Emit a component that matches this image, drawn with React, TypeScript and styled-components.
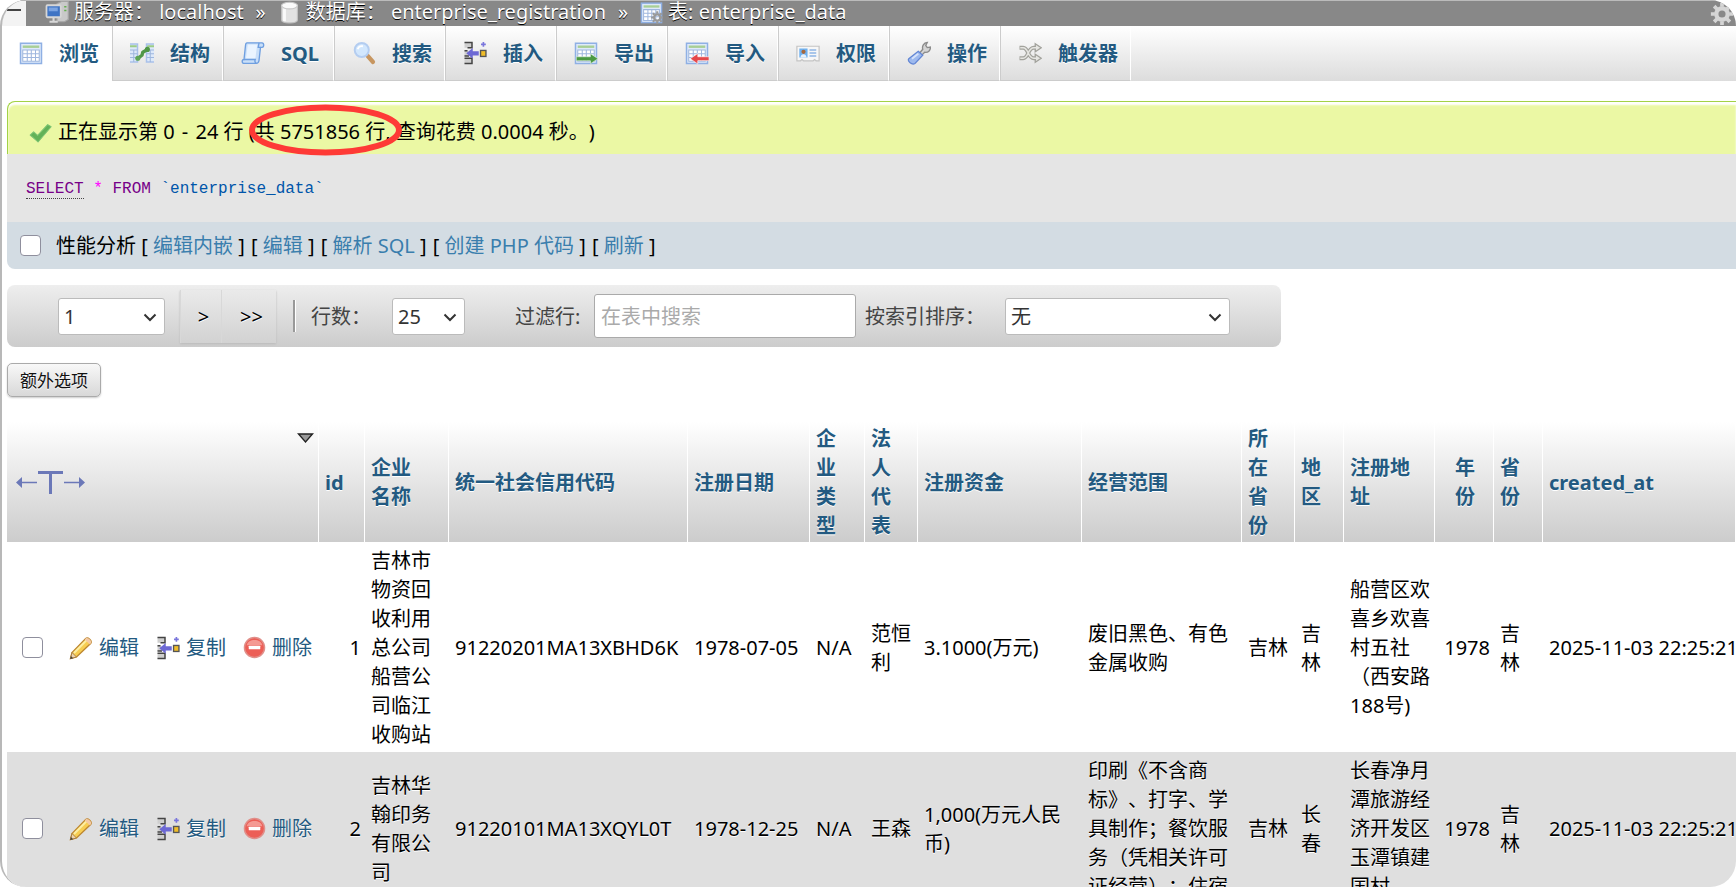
import React from 'react';
import styled, { createGlobalStyle, css } from 'styled-components';

const GlobalStyle = createGlobalStyle`
  * { box-sizing: border-box; }
  html, body { margin: 0; background: #fff; }
  body {
    overflow: hidden;
    font-family: "Noto Sans", "Noto Sans CJK SC", sans-serif;
    font-size: 20px;
    line-height: 29px;
    text-spacing-trim: space-all;
    color: #000;
  }
  a { text-decoration: none; color: #235a81; }
`;

const Frame = styled.div`
  height: 100vh;
  overflow: hidden;
  border-radius: 26px;
  border-left: 2px solid #b8b8b8;
  background: #fff;
`;

const TopBar = styled.header`
  display: flex;
  align-items: center;
  height: 26px;
  border-top: 1px solid #bbb;
  background: #888;
  color: #fff;
  text-shadow: 0 1px 0 #000;
  overflow: hidden;
`;

const Collapse = styled.button`
  width: 24px;
  height: 25px;
  padding: 8px 0 0 5px;
  border: 0;
  background: #f3f3f3;
  display: flex;
  align-items: flex-start;
  span { width: 14px; height: 2px; background: #444; }
`;

const Crumbs = styled.nav`
  display: flex;
  align-items: center;
  flex: 1;
  margin-left: 19px;
  height: 25px;
  padding-bottom: 3px;
  line-height: 20px;
  white-space: pre;
  a { color: #fff; }
  svg { margin-right: 5px; }
`;

const Crumb = styled.a`
  display: flex;
  align-items: center;
`;

const Sep = styled.span`
  width: 34px;
  text-align: center;
`;

const GearButton = styled.button`
  padding: 0;
  margin-right: 2px;
  border: 0;
  background: none;
  display: flex;
`;

const Tabs = styled.nav`
  display: flex;
  height: 55px;
  background: linear-gradient(#fff, #dcdcdc);
`;

const Tab = styled.a<{ $active?: boolean }>`
  display: flex;
  align-items: center;
  gap: 16px;
  min-width: 111px;
  padding: 0 12px 0 17px;
  border-left: 1px solid #ccc;
  border-right: 1px solid #fff;
  border-bottom: 1px solid #ccc;
  font-weight: bold;
  text-shadow: 0 1px 0 #fff;
  white-space: nowrap;
  ${(p) => p.$active && css`
    min-width: 109px;
    background: #fff;
    border-left: 0;
    border-color: #fff;
  `}
`;

const Content = styled.main`
  padding: 20px 0 0 5px;
`;

const Notice = styled.div`
  display: flex;
  align-items: center;
  gap: 6px;
  height: 53px;
  padding: 6px 0 0 21px;
  border: solid #a2d246;
  border-width: 1px 0 0 1px;
  border-radius: 8px 0 0 0;
  background: #ebf8a4;
  box-shadow: inset 0 3px 2px #fff;
`;

const Dash = styled.span`
  margin: 0 2px;
`;

const Marked = styled.span`
  position: relative;
  svg { position: absolute; left: -6px; top: -14px; }
`;

const SqlBox = styled.div`
  height: 68px;
  padding: 17px 19px;
  background: #e5e5e5;
  code {
    font: 16px/29px "Liberation Mono", "Noto Sans CJK SC", monospace;
    color: #05a;
  }
`;

const Keyword = styled.a<{ $dotted?: boolean }>`
  color: #708;
  ${(p) => p.$dotted && css`border-bottom: 1px dotted #444;`}
`;

const Star = styled.span`
  color: #f0f;
`;

const Tools = styled.div`
  display: flex;
  align-items: center;
  height: 47px;
  padding-left: 13px;
  border-radius: 0 0 0 8px;
  background: #d3dce3;
  white-space: pre;
  a { color: #3a7ead; }
`;

const ToolLink = styled.span`
  margin-right: 1px;
`;

const Check = styled.input`
  appearance: none;
  flex: none;
  width: 21px;
  height: 21px;
  margin: 0;
  border: 1px solid #8f8f9d;
  border-radius: 4px;
  background: #fff;
`;

const ToolsLabel = styled.label`
  margin-left: 15px;
`;

const Pager = styled.form`
  display: flex;
  align-items: center;
  width: fit-content;
  height: 62px;
  margin-top: 16px;
  padding: 0 51px;
  border-radius: 8px;
  background: linear-gradient(#eee, #ccc);
  color: #444;
  white-space: nowrap;
`;

const SelectBox = styled.span<{ $w: number }>`
  position: relative;
  display: flex;
  width: ${(p) => p.$w}px;
  select {
    appearance: none;
    width: 100%;
    height: 37px;
    padding: 0 5px;
    border: 1px solid #bbb;
    border-radius: 3px;
    background: #fff;
    color: #333;
    font: 20px "Noto Sans", "Noto Sans CJK SC", sans-serif;
  }
  svg {
    position: absolute;
    right: 8px;
    top: 15px;
    pointer-events: none;
  }
`;

const PageButtons = styled.div`
  display: flex;
  margin: 0 17px 0 15px;
  box-shadow: 0 1px 2px #bbb;
`;

const PageButton = styled.button<{ $w: number }>`
  width: ${(p) => p.$w}px;
  height: 53px;
  padding: 0 0 0 5px;
  border: 0;
  border-left: 1px solid #d8d8d8;
  background: linear-gradient(#eaeaea, #d2d2d2);
  font: 20px "Noto Sans", sans-serif;
  text-shadow: 0 1px 0 #fff;
`;

const Divider = styled.span`
  width: 3px;
  height: 32px;
  margin-right: 15px;
  border-left: 2px solid #999;
  border-right: 1px solid #fff;
`;

const FieldLabel = styled.label<{ $w: number }>`
  width: ${(p) => p.$w}px;
`;

const FilterInput = styled.input`
  width: 262px;
  height: 44px;
  margin-right: 9px;
  padding: 0 6px;
  border: 1px solid #aaa;
  border-radius: 3px;
  font: 20px "Noto Sans", "Noto Sans CJK SC", sans-serif;
  &::placeholder { color: #aaa; }
`;

const Spacer = styled.span`
  width: 50px;
`;

const OptionsButton = styled.button`
  display: block;
  height: 34px;
  margin: 16px 0 25px;
  padding: 0 12px 2px;
  border: 1px solid #aaa;
  border-radius: 5px;
  background: linear-gradient(#f8f8f8, #d8d8d8);
  box-shadow: 0 1px 2px #ccc;
  color: #111;
  text-shadow: 0 1px 0 #fff;
  font: 17px "Noto Sans", "Noto Sans CJK SC", sans-serif;
`;

const Table = styled.table`
  width: 100%;
  table-layout: fixed;
  border-collapse: separate;
  border-spacing: 0;
`;

const HeadRow = styled.tr`
  background: linear-gradient(#fff, #ccc);
`;

const Th = styled.th<{ $align?: string }>`
  height: 120px;
  padding: 2px 4px 2px 6px;
  border-right: 1px solid #fff;
  text-align: ${(p) => p.$align || 'left'};
  vertical-align: middle;
  font-weight: bold;
  color: #235a81;
  text-shadow: 0 1px 0 #fff;
  white-space: nowrap;
`;

const ActionHead = styled.div`
  display: flex;
  justify-content: space-between;
  height: 116px;
  padding-left: 3px;
  > :first-child { align-self: center; }
  > :last-child { margin-top: 9px; }
`;

const Row = styled.tr<{ $even?: boolean }>`
  background: ${(p) => (p.$even ? '#dfdfdf' : '#fff')};
  text-shadow: 0 1px 0 #fff;
`;

const Td = styled.td<{ $align?: string; $nowrap?: boolean }>`
  padding: 4px 4px 3px 6px;
  vertical-align: middle;
  text-align: ${(p) => p.$align || 'left'};
  white-space: ${(p) => (p.$nowrap ? 'nowrap' : 'normal')};
`;

const Actions = styled.div`
  display: flex;
  align-items: center;
  padding-left: 9px;
  a {
    display: flex;
    flex: none;
    align-items: center;
    gap: 6px;
    margin-right: 17px;
    white-space: nowrap;
  }
  a:last-child { margin-right: 0; }
  input { margin-right: 26px; }
`;

const Svg = ({ size = 24, children }: { size?: number; children: React.ReactNode }) => (
  <svg width={size} height={size} viewBox="0 0 16 16" fill="none" aria-hidden="true">
    {children}
  </svg>
);

const Grid = () => (
  <>
    <rect x="1" y="1.5" width="14" height="13.5" fill="#dfeafa" stroke="#8fb0e4" />
    <rect x="2.5" y="3" width="11" height="1.6" fill="#a8cf95" />
    <rect x="2.5" y="6" width="11" height="7.5" fill="#fff" />
    <path d="M2.5 6h11v7.5h-11zM2.5 8.5h11M2.5 11h11M5.5 6v7.5M8.2 6v7.5M11 6v7.5" stroke="#9fb7de" strokeWidth=".7" />
  </>
);
const BrowseIcon = () => <Svg><Grid /></Svg>;
const StructureIcon = () => (
  <Svg>
    <path d="M0 2h5v12H0M16 2h-5v12h5" fill="#dde9fa" stroke="#a9c1ea" />
    <path d="M0 3.500h4.500M11.500 3.500H16" stroke="#9ccc86" strokeWidth="1.300" />
    <path d="M0 6h5M0 8.500h5M0 11h5M2.500 6v8M11 6h5M11 8.500h5M11 11h5M13.500 6v8" stroke="#9fb7de" strokeWidth=".7" />
    <path d="M5 11.700 8 9.500 8.500 7.500 12 5.500" stroke="#4f9747" strokeWidth="2.200" strokeLinejoin="round" />
    <circle cx="5.200" cy="11.500" r="1.700" fill="#5ea556" /><circle cx="11.600" cy="5.600" r="1.700" fill="#4f9747" />
  </Svg>
);
const SqlIcon = () => (
  <Svg>
    <path d="M4 1.200h10c1.500 0 1.500 3 0 3h-1L12 13c-.2 1.300-.7 1.900-1.800 1.900H2c-1.600 0-1.600-2.600 0-2.600L3 3c.1-1.200.4-1.800 1-1.800Z" fill="#c9dff9" stroke="#6f9fe0" strokeWidth=".9" />
    <path d="M2 12.300h7.500c-.4 1 0 2.200.7 2.600M13 4.200h-1.500l.5-3" stroke="#6f9fe0" strokeWidth=".9" />
    <path d="M4.500 2.300h6.300l-1.200 9.200H3.300z" fill="#eaf4ff" />
  </Svg>
);
const SearchIcon = () => (
  <Svg>
    <path d="m10.500 10 3.500 4" stroke="#c79660" strokeWidth="2.800" strokeLinecap="round" />
    <circle cx="6.500" cy="6" r="4.700" fill="#d2e7fd" stroke="#b4cdf0" strokeWidth="1.300" />
    <path d="M3.800 5.500c.5-1.700 2-2.300 3.500-2" stroke="#fff" strokeWidth="1.200" />
  </Svg>
);
const InsertIcon = () => (
  <Svg>
    <path d="M1 1h5v3.500H1zM1 11.500h5V15H1zM1 6.500h2.500V10H1z" fill="#cfcfcf" />
    <path d="M1 1h5v3.500H3M1 11.500h5V15H1M1 6.500h2M1 10h3" stroke="#444" strokeWidth="1" />
    <path d="M2.200 8.200 6.500 4.700v2.100h4v2.900h-4v2.200z" fill="#6c68d4" />
    <rect x="11.700" y="6.300" width="3.600" height="4" fill="#f0bd28" stroke="#555" strokeWidth=".9" />
    <path d="M13.600.6v3.200M12 2.200h3.200" stroke="#7a76dc" strokeWidth="1.100" />
  </Svg>
);
const ExportIcon = () => (
  <Svg>
    <Grid />
    <path d="M1.500 10.500h9.500V8.500l5 3.300-5 3.300v-1.900H1.500z" fill="#4b9a43" stroke="#e6f3e4" strokeWidth=".4" />
  </Svg>
);
const ImportIcon = () => (
  <Svg>
    <Grid />
    <path d="M16 10.500H8.500V8.300l-5 3.500 5 3.500v-2.200H16z" fill="#e5484b" stroke="#fff" strokeWidth=".4" />
  </Svg>
);
const PrivilegesIcon = () => (
  <Svg>
    <path d="M.6 3.500h14.800v9.700h-2l-1-.9-1 .9H5l-1-.9-1 .9H.6z" fill="#f7f7f7" stroke="#c4c4c4" strokeWidth=".8" />
    <rect x="2.200" y="5" width="5.500" height="6" fill="#6fb1f0" />
    <circle cx="5" cy="7.200" r="1.400" fill="#a8683c" /><path d="M3 11c0-3 4-3 4 0z" fill="#e9f2fb" />
    <path d="M9 6h4.500M9 8h4.500M9 10h4.500" stroke="#a9c6ea" strokeWidth="1.200" />
  </Svg>
);
const WrenchIcon = () => (
  <Svg>
    <path d="M8 8.500 10.500 5.500c-.6-2 .6-4.300 3-4.500L12.500 3l1 1.400L15.600 4c.2 2.200-1.600 4-3.800 3.500L9.500 9.800z" fill="#d4d4d4" stroke="#8c8c8c" strokeWidth=".9" />
    <path d="M7.500 6.800 10.500 9.500 5.300 15C3.300 16.300 0 13.500 1.200 11.800z" fill="#9db9ee" stroke="#6286d4" strokeWidth=".8" />
    <path d="M3.300 11.800 7.500 8.500" stroke="#d5e2fa" strokeWidth="1.300" />
  </Svg>
);
const TriggersIcon = () => (
  <Svg>
    <path d="M1 4.500h2.500c3.500 0 3 7 7 7H14M1 11.500h2.500c3.500 0 3-7 7-7H14" stroke="#a2a29c" strokeWidth="2.600" />
    <path d="M11.500 1.800 15.500 4.500 11.500 7.200zM11.500 8.800 15.500 11.500 11.500 14.200z" fill="#e6e6e2" stroke="#a2a29c" strokeWidth=".9" />
    <path d="M1.500 4.500h2c3.500 0 3 7 7 7H13M1.500 11.500h2c3.500 0 3-7 7-7H13" stroke="#e6e6e2" strokeWidth="1" />
  </Svg>
);
const ServerIcon = () => (
  <Svg>
    <path d="M8 2.500 11 1h4.500v12L13 14.500H8z" fill="#c9c9c9" stroke="#a5a5a5" strokeWidth=".8" />
    <path d="M12.800 4.500h1.500M12.800 7h1.500" stroke="#63b04e" />
    <rect x="1" y="3.500" width="9.500" height="8" rx=".6" fill="#3f74c4" stroke="#d6d6d6" strokeWidth="1.200" />
    <path d="M2.500 5h6v2.500h-6z" fill="#7ba4e2" />
    <path d="M5.700 12v2M3 14.500h5.500" stroke="#d8d8d8" strokeWidth="1.400" />
  </Svg>
);
const DatabaseIcon = () => (
  <Svg size={23}>
    <path d="M2.500 3v10c0 3 11 3 11 0V3z" fill="#e2e2e2" stroke="#c0c0c0" strokeWidth=".8" />
    <path d="M4.500 5v9" stroke="#fafafa" strokeWidth="2" />
    <ellipse cx="8" cy="3.200" rx="5.500" ry="2.300" fill="#fafafa" stroke="#c8c8c8" strokeWidth=".8" />
  </Svg>
);
const Cog = ({ r = 1, fill }: { r?: number; fill: string }) => (
  <g transform={`translate(8 8) scale(${r})`}>
    <circle r="4" stroke={fill} strokeWidth="3" />
    {[0, 45, 90, 135].map((a) => (
      <path key={a} d="M0-7.800V-5M0 7.800V5" stroke={fill} strokeWidth="2.600" transform={`rotate(${a})`} />
    ))}
  </g>
);
const TableIcon = () => (
  <Svg size={23}>
    <Grid />
    <g transform="translate(4 3.500)"><Cog r={0.55} fill="#999" /></g>
  </Svg>
);
const GearIcon = () => <Svg><Cog r={0.95} fill="#d5d5d5" /></Svg>;
const TickIcon = () => (
  <Svg size={23}>
    <path d="m.8 10.500 2.400-2.300L6 10.700l7-7.500 2.400 1.500L6.300 15.300z" fill="#62b257" stroke="#7cc473" strokeWidth=".7" strokeLinejoin="round" />
  </Svg>
);
const PencilIcon = () => (
  <Svg>
    <path d="M1 15 2 11 11 1.800c1.500-1.400 4.800 1.400 3.400 3.200L5 14z" fill="#f7cd52" stroke="#bd8731" strokeWidth=".9" />
    <path d="M3.300 11.300 11.500 3" stroke="#fdeea2" strokeWidth="1.300" />
    <path d="m10.500 2.300 3.400 3.300.6-.7c1.200-1.600-2-4.500-3.400-3.200z" fill="#f3c9a4" />
    <path d="m1 15 1-4 3 3z" fill="#ecd3b0" stroke="#a87a3a" strokeWidth=".6" /><path d="m.8 15.300.5-2 1.500 1.500z" fill="#444" />
  </Svg>
);
const DeleteIcon = () => (
  <Svg size={23}>
    <circle cx="8" cy="8" r="7" fill="#ec5e56" stroke="#e08f8a" />
    <path d="M2.500 6.500c1-5 10-5 11 0z" fill="#f49a93" />
    <rect x="4" y="6.700" width="8" height="2.600" rx=".5" fill="#fff" />
  </Svg>
);
const ArrowsIcon = () => (
  <svg width="70" height="26" viewBox="0 0 70 26" fill="none" aria-hidden="true">
    <path d="M5 13.500h16M48 13.500h16" stroke="#6b78b8" strokeWidth="1.500" />
    <path d="m0 13.500 6-5.500v11zM69 13.500 63 8v11z" fill="#6b78b8" />
    <path d="M22 3.500h25M34.500 3v22" stroke="#6b78b8" strokeWidth="3" />
  </svg>
);
const SortIcon = () => (
  <svg width="17" height="11" viewBox="0 0 17 11" aria-hidden="true">
    <path d="M1.500 1h14l-7 8z" fill="#999" stroke="#222" strokeWidth="1.400" />
  </svg>
);

const SelectField = ({ width, id, label, value }: { width: number; id?: string; label?: string; value: string }) => (
  <SelectBox $w={width}>
    <select id={id} aria-label={label}><option>{value}</option></select>
    <svg width="14" height="9" viewBox="0 0 14 9" fill="none" aria-hidden="true">
      <path d="m1.500 1.500 5.500 5.500 5.500-5.500" stroke="#333" strokeWidth="2" />
    </svg>
  </SelectBox>
);

const tabs: [string, React.FC][] = [
  ['浏览', BrowseIcon], ['结构', StructureIcon], ['SQL', SqlIcon], ['搜索', SearchIcon],
  ['插入', InsertIcon], ['导出', ExportIcon], ['导入', ImportIcon], ['权限', PrivilegesIcon],
  ['操作', WrenchIcon], ['触发器', TriggersIcon],
];

const links = ['编辑内嵌', '编辑', '解析 SQL', '创建 PHP 代码', '刷新'];

const columns: { lines: string[]; width?: number; align?: string }[] = [
  { lines: ['id'], width: 46 },
  { lines: ['企业', '名称'], width: 84 },
  { lines: ['统一社会信用代码'], width: 239 },
  { lines: ['注册日期'], width: 122 },
  { lines: ['企', '业', '类', '型'], width: 55 },
  { lines: ['法', '人', '代', '表'], width: 53 },
  { lines: ['注册资金'], width: 164 },
  { lines: ['经营范围'], width: 160 },
  { lines: ['所', '在', '省', '份'], width: 53 },
  { lines: ['地', '区'], width: 49 },
  { lines: ['注册地', '址'], width: 91 },
  { lines: ['年', '份'], width: 59, align: 'center' },
  { lines: ['省', '份'], width: 49 },
  { lines: ['created_at'] },
];

const rows = [
  ['1', '吉林市物资回收利用总公司船营公司临江收购站', '91220201MA13XBHD6K', '1978-07-05', 'N/A', '范恒利',
    '3.1000(万元)', '废旧黑色、有色金属收购', '吉林', '吉林', '船营区欢喜乡欢喜村五社（西安路188号)', '1978', '吉林', '2025-11-03 22:25:21'],
  ['2', '吉林华翰印务有限公司', '91220101MA13XQYL0T', '1978-12-25', 'N/A', '王森',
    '1,000(万元人民币)', '印刷《不含商标》、打字、学具制作；餐饮服务（凭相关许可证经营）；住宿', '吉林', '长春', '长春净月潭旅游经济开发区玉潭镇建国村', '1978', '吉林', '2025-11-03 22:25:21'],
];
const nowrapCols = [0, 2, 3, 4, 8, 11, 13];

export default function App() {
  return (
    <Frame>
      <GlobalStyle />
      <TopBar>
        <Collapse type="button" aria-label="折叠"><span /></Collapse>
        <Crumbs>
          <Crumb href="#server"><ServerIcon />服务器： localhost</Crumb>
          <Sep>»</Sep>
          <Crumb href="#database"><DatabaseIcon />数据库： enterprise_registration</Crumb>
          <Sep>»</Sep>
          <Crumb href="#table"><TableIcon />表: enterprise_data</Crumb>
        </Crumbs>
        <GearButton type="button" aria-label="设置"><GearIcon /></GearButton>
      </TopBar>
      <Tabs>
        {tabs.map(([label, Icon], i) => (
          <Tab key={label} href={`#tab-${i}`} $active={i === 0}><Icon />{label}</Tab>
        ))}
      </Tabs>
      <Content>
        <Notice>
          <TickIcon />
          <span>
            正在显示第 0 <Dash>-</Dash> 24 行 (
            <Marked>
              共 5751856 行,
              <svg width="153" height="52" viewBox="0 0 153 52" fill="none" aria-hidden="true">
                <ellipse cx="76.500" cy="26" rx="73.500" ry="22.500" stroke="#fe3a36" strokeWidth="6" />
              </svg>
            </Marked>{' '}
            查询花费 0.0004 秒。)
          </span>
        </Notice>
        <SqlBox>
          <code>
            <Keyword href="#select" $dotted>SELECT</Keyword> <Star>*</Star> <Keyword as="span">FROM</Keyword> `enterprise_data`
          </code>
        </SqlBox>
        <Tools>
          <Check type="checkbox" id="profiling" />
          <ToolsLabel htmlFor="profiling">性能分析</ToolsLabel>
          {links.map((l) => (
            <ToolLink key={l}> [ <a href="#query">{l}</a> ]</ToolLink>
          ))}
        </Tools>
        <Pager onSubmit={(e) => e.preventDefault()}>
          <SelectField width={107} label="页码" value="1" />
          <PageButtons>
            <PageButton $w={41} type="button">&gt;</PageButton>
            <PageButton $w={55} type="button">&gt;&gt;</PageButton>
          </PageButtons>
          <Divider />
          <FieldLabel $w={81} htmlFor="rows">行数：</FieldLabel>
          <SelectField width={73} id="rows" value="25" />
          <Spacer />
          <FieldLabel $w={79} htmlFor="filter">过滤行:</FieldLabel>
          <FilterInput id="filter" type="text" placeholder="在表中搜索" />
          <FieldLabel $w={140} htmlFor="sort">按索引排序：</FieldLabel>
          <SelectField width={225} id="sort" value="无" />
        </Pager>
        <OptionsButton type="button">额外选项</OptionsButton>
        <Table>
          <colgroup>
            <col width={312} />
            {columns.map((c, i) => <col key={i} width={c.width} />)}
          </colgroup>
          <thead>
            <HeadRow>
              <Th><ActionHead><ArrowsIcon /><SortIcon /></ActionHead></Th>
              {columns.map((c, i) => (
                <Th key={i} $align={c.align}>
                  <a href="#sort">
                    {c.lines.map((l, j) => <React.Fragment key={j}>{j > 0 && <br />}{l}</React.Fragment>)}
                  </a>
                </Th>
              ))}
            </HeadRow>
          </thead>
          <tbody>
            {rows.map((r, i) => (
              <Row key={r[0]} $even={i % 2 === 1}>
                <Td>
                  <Actions>
                    <Check type="checkbox" aria-label={`选择 ${r[0]}`} />
                    <a href="#edit"><PencilIcon />编辑</a>
                    <a href="#copy"><InsertIcon />复制</a>
                    <a href="#delete"><DeleteIcon />删除</a>
                  </Actions>
                </Td>
                {r.map((v, j) => (
                  <Td key={j} $align={j === 0 || j === 11 ? 'right' : 'left'} $nowrap={nowrapCols.includes(j)}>{v}</Td>
                ))}
              </Row>
            ))}
          </tbody>
        </Table>
      </Content>
    </Frame>
  );
}
